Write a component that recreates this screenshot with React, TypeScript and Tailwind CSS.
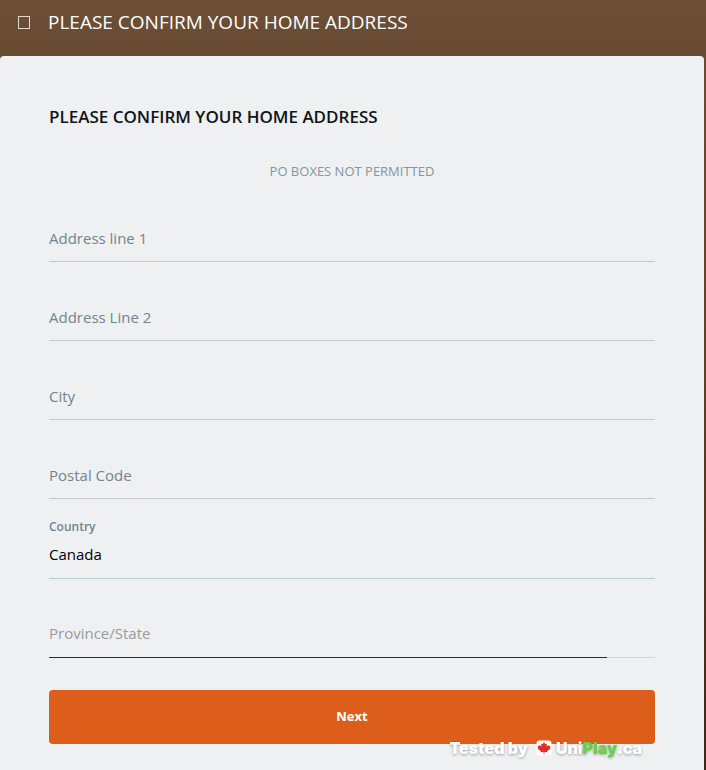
import { useState } from 'react'

const textFields = [
  { id: 'address1', label: 'Address line 1' },
  { id: 'address2', label: 'Address Line 2' },
  { id: 'city', label: 'City' },
  { id: 'postal', label: 'Postal Code' }
]

const provinces = ['Alberta', 'British Columbia', 'Manitoba', 'Ontario', 'Quebec']

function TextField({ id, label }: { id: string, label: string }) {
  return (
    <div className="relative pt-[31px]">
      <input
        id={id}
        type="text"
        placeholder=" "
        className="peer block h-12 w-full border-b border-[#c3cccf] bg-transparent text-[15px] text-black outline-none"
      />
      <label
        htmlFor={id}
        className="absolute left-0 top-5 text-xs leading-4 font-semibold text-[#72858d] peer-placeholder-shown:top-[43px] peer-placeholder-shown:text-[15px] peer-placeholder-shown:leading-6 peer-placeholder-shown:font-normal"
      >
        {label}
      </label>
    </div>
  )
}

function MapleLeaf() {
  return (
    <svg viewBox="0 0 16 16" className="size-4" aria-hidden="true">
      <rect x="0.5" y="0.5" width="15" height="15" rx="3" fill="#fff" />
      <path
        d="M8 2 9.4 4.3 10.9 3.4 10.5 6.5 12.2 4.9 12.6 6.1 14.4 5.8 13.8 7.7 14.6 8.3 11.2 11.2 11.5 12.2 8.4 11.9V14.3H7.6V11.9L4.5 12.2 4.8 11.2 1.4 8.3 2.2 7.7 1.6 5.8 3.4 6.1 3.8 4.9 5.5 6.5 5.1 3.4 6.6 4.3Z"
        fill="#dc2f26"
      />
    </svg>
  )
}

export default function App() {
  const [country, setCountry] = useState('Canada')
  const [province, setProvince] = useState('')

  return (
    <div className="flex min-h-screen flex-col bg-linear-to-b from-[#6b4e35] via-[#5a3f29] to-[#3b2819] pr-0.5 font-['Open_Sans','Noto_Sans',sans-serif]">
      <header className="flex h-14 items-start gap-[18px] px-[18px] pt-2 text-white">
        <button type="button" aria-label="Back" className="mt-2 h-[13px] w-3 border border-[#e3d9cf]" />
        <h1 className="text-[19px] leading-7">PLEASE CONFIRM YOUR HOME ADDRESS</h1>
      </header>

      <main className="grow rounded-t bg-[#eef0f2] px-[49px] pt-[47px]">
        <h2 className="text-[17px] leading-7 font-semibold text-[#101418]">PLEASE CONFIRM YOUR HOME ADDRESS</h2>
        <p className="mt-7 text-center text-[13px] leading-6 text-[#82979f]">PO BOXES NOT PERMITTED</p>

        <form onSubmit={(e) => e.preventDefault()}>
          {textFields.map((field) => (
            <TextField key={field.id} {...field} />
          ))}

          <div className="relative pt-8">
            <label htmlFor="country" className="absolute left-0 top-5 text-xs leading-4 font-semibold text-[#72858d]">
              Country
            </label>
            <select
              id="country"
              value={country}
              onChange={(e) => setCountry(e.target.value)}
              className="block h-12 w-full appearance-none border-b border-[#bccbcc] text-[15px] text-black outline-none"
            >
              <option>Canada</option>
              <option>United States</option>
            </select>
          </div>

          <div className="relative pt-[31px]">
            <select
              aria-label="Province/State"
              value={province}
              onChange={(e) => setProvince(e.target.value)}
              className="block h-12 w-full appearance-none border-b border-[#d0d7d9] text-[15px] text-[#999c9e] outline-none"
            >
              <option value="">Province/State</option>
              {provinces.map((name) => (
                <option key={name}>{name}</option>
              ))}
            </select>
            <span className="absolute bottom-0 left-0 h-px w-[92%] bg-[#2b2d30]" />
          </div>

          <button type="submit" className="mt-8 h-[54px] w-full rounded bg-[#dc5e1a] text-[13px] font-bold text-white">
            Next
          </button>
        </form>
      </main>

      <div className="fixed right-16 bottom-3 flex items-center gap-2 font-['Inter',sans-serif] text-base leading-5 font-black text-white text-shadow-[0_1px_3px_rgb(0_0_0/0.35)]">
        <span>Tested by</span>
        <span className="flex items-center gap-1">
          <MapleLeaf />
          <span>Uni<span className="text-[#6bd046]">Play</span>.ca</span>
        </span>
      </div>
    </div>
  )
}
